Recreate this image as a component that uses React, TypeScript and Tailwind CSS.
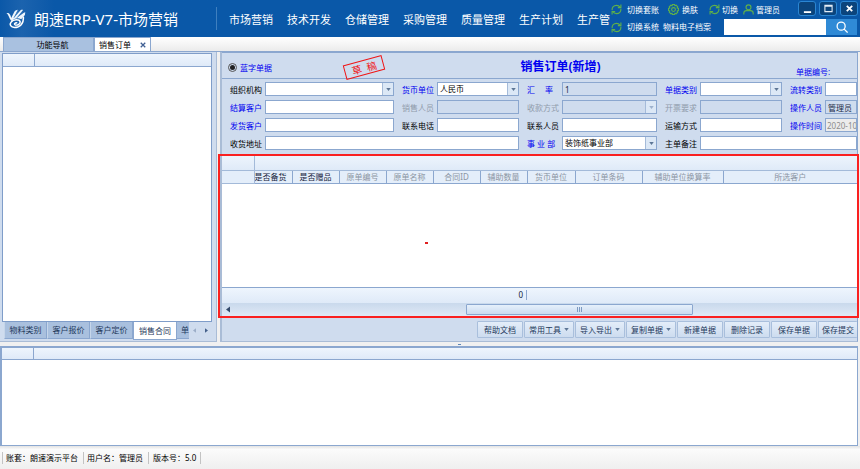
import React from "react";

const navItems = ["市场营销", "技术开发", "仓储管理", "采购管理", "质量管理", "生产计划", "生产管"];

const columns = [
  { title: "是否备货", width: 38, strong: true },
  { title: "是否赠品", width: 47, strong: true },
  { title: "原单编号", width: 47 },
  { title: "原单名称", width: 47 },
  { title: "合同ID", width: 47 },
  { title: "辅助数量", width: 47 },
  { title: "货币单位", width: 48 },
  { title: "订单条码", width: 67 },
  { title: "辅助单位换算率", width: 81 },
  { title: "所选客户" },
];

const actions = [
  { label: "帮助文档" },
  { label: "常用工具", menu: true },
  { label: "导入导出", menu: true },
  { label: "复制单据", menu: true },
  { label: "新建单据" },
  { label: "删除记录" },
  { label: "保存单据" },
];

function RefreshIcon() {
  return (
    <svg viewBox="0 0 20 20" className="h-[11px] w-[11px] shrink-0" fill="none" stroke="#5fb04a" strokeWidth="2">
      <path d="M2 11.500C1.500 6 5 2.500 10 2.500c3 0 5 1 7 3.500M18 8.500c.5 5.500-3 9-8 9-3 0-5-1-7-3.500" />
      <path d="M18 1v5.500h-5.500M2 19v-5.500h5.500" />
    </svg>
  );
}

function GearIcon() {
  return (
    <svg viewBox="0 0 20 20" className="h-[11px] w-[11px] shrink-0" fill="none" stroke="#5fb04a" strokeWidth="2">
      <path d="M8 1h4l.7 2.300 2.200-1 2.800 2.800-1 2.200L19 8v4l-2.300.7 1 2.200-2.800 2.800-2.200-1L12 19H8l-.7-2.300-2.200 1-2.800-2.800 1-2.200L1 12V8l2.300-.7-1-2.200 2.800-2.800 2.200 1z" />
      <circle cx="10" cy="10" r="3.500" />
    </svg>
  );
}

function UserIcon() {
  return (
    <svg viewBox="0 0 20 20" className="h-[11px] w-[11px] shrink-0" fill="none" stroke="#5fb04a" strokeWidth="2">
      <circle cx="10" cy="6" r="4.500" />
      <path d="M1.500 19v-2.500c0-3 2.500-4.500 5-4.500h7c2.500 0 5 1.500 5 4.500V19" />
    </svg>
  );
}

function Logo() {
  return (
    <svg viewBox="0 0 54 54" className="h-[20px] w-[20px] shrink-0" fill="none" stroke="#fff" strokeLinecap="round">
      <path d="M1 11c9-1 11 5 13 13l9-17c2-4 6-4 9-5L20 25 40 3c2-1 5-1 6 0L28 25 48 10l4-1-1 7-10 12c-8-5-20-3-25 5-7-4-8-17-15-22z" fill="#f0f6fc" stroke="none" />
      <path d="m22 23 11-18M29 24 44 8" stroke="#5d97cf" strokeWidth="1.500" />
      <path d="M47 22c1 17-9 28-24 28-10 0-15-8-9-15 6-8 22-8 24-1 2 6-7 11-13 9-4-2-2-6 4-6" strokeWidth="4" />
    </svg>
  );
}

function Caret({ className = "text-[#5d7696]" }: { className?: string }) {
  return (
    <svg viewBox="0 0 6 4" className={`h-[3px] w-[5px] shrink-0 ${className}`} fill="currentColor">
      <path d="M0 0h6L3 4z" />
    </svg>
  );
}

type FieldProps = {
  id: string;
  label: string;
  tone?: "black" | "blue" | "gray";
  value?: string;
  kind?: "text" | "select";
  disabled?: boolean;
  wide?: boolean;
  fill?: string;
};

function Field({ id, label, tone = "black", value = "", kind = "text", disabled, wide, fill }: FieldProps) {
  const color = tone === "blue" ? "text-[#0000f0]" : tone === "gray" ? "text-[#8f9bab]" : "text-black";
  const bg = fill ?? (disabled ? "bg-[#cfdcee]" : "bg-white");
  return (
    <div className={`flex h-[14px] min-w-0 items-center ${wide ? "col-span-2" : ""}`}>
      <label htmlFor={id} className={`w-[35px] shrink-0 whitespace-pre pt-px ${color}`}>
        {label}
      </label>
      {kind === "select" ? (
        <div className={`flex h-full min-w-0 flex-1 border border-[#8ba7cf] ${bg}`}>
          <select
            id={id}
            disabled={disabled}
            defaultValue={value}
            className="min-w-0 flex-1 appearance-none bg-transparent pl-[2px] text-black outline-none"
          >
            <option>{value}</option>
          </select>
          <span className="pointer-events-none flex w-[11px] items-center justify-center border-l border-[#a5bbd9] bg-[#dce8f6]">
            <Caret className={disabled ? "text-[#9db1cd]" : "text-[#5d7696]"} />
          </span>
        </div>
      ) : (
        <input
          id={id}
          type="text"
          disabled={disabled}
          defaultValue={value}
          className={`h-full w-0 min-w-0 flex-1 border border-[#8ba7cf] outline-none ${bg} ${
            fill === "bg-[#ececec]" ? "pl-px text-[#8d8d8d]" : "px-[2px] text-[#1c2c48]"
          }`}
        />
      )}
    </div>
  );
}

function Header() {
  return (
    <header className="flex h-[37px] shrink-0 bg-[#0a58a8] text-white">
      <div className="flex w-[216px] shrink-0 items-center bg-linear-to-r from-[#0a58a8] via-[#1b63ae] via-10% to-[#0a58a8] to-25% pl-[6px]">
        <Logo />
        <h1 className="ml-[8px] whitespace-nowrap text-[15px] leading-5">朗速ERP-V7-市场营销</h1>
      </div>
      <nav className="my-[7px] flex min-w-0 flex-1 items-center gap-[14px] overflow-hidden border-l border-[#3f7fbf] pl-3 pt-[2px] text-[11px]">
        {navItems.map((item) => (
          <a key={item} href="#" className="shrink-0">
            {item}
          </a>
        ))}
      </nav>
      <div className="flex w-[249px] shrink-0 flex-col">
        <div className="flex h-[19px] items-center">
          <button className="flex w-[57px] items-center gap-[5px]">
            <RefreshIcon />
            切换套账
          </button>
          <button className="flex w-[41px] items-center gap-[3px]">
            <GearIcon />
            换肤
          </button>
          <button className="flex w-[34px] items-center gap-[2px]">
            <RefreshIcon />
            切换
          </button>
          <button className="flex items-center gap-[2px] whitespace-nowrap">
            <UserIcon />
            管理员
          </button>
          <div className="ml-auto flex gap-[3px] self-start pr-[2px] pt-px">
            <button aria-label="最小化" className="flex h-[15px] w-[18px] items-center justify-center rounded-[3px] border border-[#2b86d3] bg-[#0b447c]">
              <svg viewBox="0 0 10 10" className="h-[9px] w-[9px]" stroke="#fff" strokeWidth="2"><path d="M1 9h8" /></svg>
            </button>
            <button aria-label="最大化" className="flex h-[15px] w-[18px] items-center justify-center rounded-[3px] border border-[#2b86d3] bg-[#0b447c]">
              <svg viewBox="0 0 10 10" className="h-[9px] w-[9px]" fill="none" stroke="#e5edf5" strokeWidth="1.200"><path d="M1 1.500h8v7H1zM1 2.500h8" /></svg>
            </button>
            <button aria-label="关闭" className="flex h-[15px] w-[18px] items-center justify-center rounded-[3px] border border-[#2b86d3] bg-[#0b447c]">
              <svg viewBox="0 0 10 10" className="h-[9px] w-[9px]" stroke="#fff" strokeWidth="2"><path d="m2 2 6 6M8 2 2 8" /></svg>
            </button>
          </div>
        </div>
        <div className="flex h-4 items-center">
          <button className="flex items-center gap-[5px] whitespace-nowrap">
            <RefreshIcon />
            切换系统
          </button>
          <button className="ml-1 whitespace-nowrap">物料电子档案</button>
          <form className="ml-auto flex h-full w-[136px] pr-[3px]">
            <input type="search" aria-label="搜索" className="h-full w-0 flex-1 bg-white px-1 text-black outline-none" />
            <button type="button" aria-label="搜索" className="flex w-[31px] items-center justify-center bg-[#2f8ad6]">
              <svg viewBox="0 0 14 14" className="h-3 w-3" fill="none" stroke="#fff" strokeWidth="1.500">
                <circle cx="6" cy="6" r="4.700" />
                <path d="m9.500 9.500 4 4" />
              </svg>
            </button>
          </form>
        </div>
      </div>
    </header>
  );
}

function SidePanel() {
  const tab = "h-[17px] w-[43px] shrink-0 border border-t-0 border-[#8ba7cf] border-l-[#c6d6ea] bg-[#a9c0de] text-[#1e395b]";
  return (
    <aside className="flex w-[217px] shrink-0 flex-col border-b border-r border-[#a9bcd6] bg-[#cfdcee] pl-[2px] pr-1 pt-px">
      <div className="flex flex-1 flex-col border border-[#7f9dc9] bg-white">
        <div className="flex h-[13px] border-b border-[#8ba7cf] bg-linear-to-b from-[#eef5fd] to-[#dfeaf8]">
          <span className="w-8 border-r border-[#8ba7cf]" />
        </div>
      </div>
      <div role="tablist" className="flex h-[19px] items-start pl-[2px]">
        <button role="tab" className={tab}>物料类别</button>
        <button role="tab" className={tab}>客户报价</button>
        <button role="tab" className={tab}>客户定价</button>
        <button role="tab" aria-selected="true" className="h-[18px] w-11 shrink-0 border border-t-0 border-[#8ba7cf] bg-white text-[#1e395b]">
          销售合同
        </button>
        <button role="tab" className="h-[17px] w-3 shrink-0 border-b border-[#8ba7cf] bg-[#a9c0de] pl-1 text-left text-[#1e395b]">
          单
        </button>
        <button aria-label="向左" className="flex h-[17px] w-3 items-center justify-center text-[#9caec8]">
          <svg viewBox="0 0 4 6" className="h-[5px] w-[3px]" fill="currentColor"><path d="M4 0v6L0 3z" /></svg>
        </button>
        <button aria-label="向右" className="flex h-[17px] w-3 items-center justify-center text-[#44608a]">
          <svg viewBox="0 0 4 6" className="h-[5px] w-[3px]" fill="currentColor"><path d="M0 0v6l4-3z" /></svg>
        </button>
      </div>
    </aside>
  );
}

function OrderHead() {
  return (
    <div className="flex h-[27px] items-center border-y border-[#8ba7cf] pl-[6px]">
      <label className="flex w-[116px] shrink-0 items-center gap-[3px] pt-[4px] text-[#0000f0]">
        <input
          type="radio"
          name="kind"
          defaultChecked
          className="h-[9px] w-[9px] appearance-none rounded-full border border-[#555] bg-[#222] bg-clip-content p-px"
        />
        蓝字单据
      </label>
      <div className="shrink-0 pt-[3px]">
        <span className="flex h-[15px] w-10 -rotate-15 items-center justify-center border border-[#f01414] text-[10px] text-[#f01414]">
          草&nbsp;&nbsp;稿
        </span>
      </div>
      <h2 className="flex-1 whitespace-nowrap pr-[59px] pt-[2px] text-center text-[12px] leading-4 font-bold text-[#0000f0]">
        销售订单(新增)
      </h2>
      <span className="w-[61px] shrink-0 pt-3 text-[#0000f0]">单据编号:</span>
    </div>
  );
}

function OrderForm() {
  return (
    <form className="grid grid-cols-[164px_117px_130px_117px_minmax(0,1fr)] gap-x-2 gap-y-1 pb-[5px] pl-2 pt-[3px]">
      <Field id="org" label="组织机构" kind="select" />
      <Field id="currency" label="货币单位" tone="blue" kind="select" value="人民币" />
      <Field id="rate" label="汇　 率" tone="blue" value="1" fill="bg-[#cfdcee]" />
      <Field id="type" label="单据类别" tone="blue" kind="select" />
      <Field id="flow" label="流转类别" tone="blue" />
      <Field id="settle" label="结算客户" tone="blue" />
      <Field id="seller" label="销售人员" tone="gray" disabled />
      <Field id="pay" label="收款方式" tone="gray" kind="select" disabled />
      <Field id="invoice" label="开票要求" tone="gray" disabled />
      <Field id="operator" label="操作人员" tone="blue" value="管理员" fill="bg-[#cfdcee]" />
      <Field id="ship" label="发货客户" tone="blue" />
      <Field id="phone" label="联系电话" />
      <Field id="contact" label="联系人员" />
      <Field id="transport" label="运输方式" />
      <Field id="time" label="操作时间" tone="blue" value="2020-10" fill="bg-[#ececec]" />
      <Field id="address" label="收货地址" wide />
      <Field id="dept" label="事 业 部" tone="blue" kind="select" value="装饰纸事业部" />
      <Field id="note" label="主单备注" wide />
    </form>
  );
}

function OrderGrid() {
  return (
    <section className="relative">
      <table className="w-full table-fixed border-collapse bg-white leading-[10px]">
        <colgroup>
          <col style={{ width: 32 }} />
          {columns.map((c) => (
            <col key={c.title} style={{ width: c.width }} />
          ))}
        </colgroup>
        <thead>
          <tr className="h-[15px] bg-linear-to-b from-[#eef5fd] to-[#dfeaf8]">
            <td className="border-b border-r border-[#a3bad9]" />
            <td colSpan={10} className="border-b border-[#a3bad9]" />
          </tr>
          <tr className="h-[13px] bg-[#e4eefa]">
            <td className="border-b border-r border-[#a3bad9]" />
            {columns.map((c, i) => (
              <th
                key={c.title}
                className={`overflow-hidden whitespace-nowrap border-b border-[#8ba7cf] p-0 font-normal ${
                  i < 9 ? "border-r" : ""
                } ${i === 0 ? "text-left" : "text-center"} ${c.strong ? "text-[#14233c]" : "text-[#8b95a3]"}`}
              >
                {c.title}
              </th>
            ))}
          </tr>
        </thead>
        <tbody>
          <tr className="h-[104px]">
            <td colSpan={11} />
          </tr>
        </tbody>
        <tfoot>
          <tr className="h-4 border-t border-[#8ba7cf] bg-linear-to-b from-[#eef5fd] to-[#dfeaf8]">
            <td colSpan={6} />
            <td className="p-0 text-right">
              <span className="inline-block border-r border-[#8ba7cf] pr-[3px] text-[#14233c]">0</span>
            </td>
            <td colSpan={4} />
          </tr>
        </tfoot>
      </table>
      <div className="flex h-[13px] items-center bg-linear-to-b from-[#c9d9ec] to-[#dfe9f6] pl-1">
        <svg viewBox="0 0 4 6" className="h-[7px] w-[4px] text-[#33496b]" fill="currentColor"><path d="M4 0v6L0 3z" /></svg>
        <span className="flex-1" />
        <span className="flex h-[11px] w-[36%] items-center justify-center gap-px rounded-[1px] border border-[#8ba7cf] bg-linear-to-b from-[#e6f0fb] to-[#cbdcf0]">
          <i className="h-[5px] w-px bg-[#7d9ac2]" />
          <i className="h-[5px] w-px bg-[#7d9ac2]" />
          <i className="h-[5px] w-px bg-[#7d9ac2]" />
        </span>
        <span className="w-[26%]" />
      </div>
      <span className="absolute left-[203px] top-[87px] h-[2px] w-[3px] bg-[#e02020]" />
      <div className="pointer-events-none absolute -bottom-[2px] -left-[4px] -right-[2px] -top-px border-2 border-[#fa2020]" />
    </section>
  );
}

function Toolbar() {
  const base =
    "flex h-[17px] shrink-0 items-center justify-center gap-[3px] whitespace-nowrap rounded-[1px] border border-[#a9bfdc] bg-linear-to-b from-[#e3edf9] to-[#cddcef] text-[#1e395b]";
  return (
    <div className="flex flex-1 items-start justify-end gap-px pt-[5px]">
      {actions.map((a) => (
        <button key={a.label} className={`${base} ${a.menu ? "w-[50px]" : "w-[46px]"}`}>
          {a.label}
          {a.menu && <Caret />}
        </button>
      ))}
      <button className={`${base} w-[39px] border-r-0`}>保存提交</button>
    </div>
  );
}

export default function App() {
  return (
    <div className="flex min-h-screen flex-col overflow-hidden bg-[#f0f0f0] font-['Noto_Sans','Noto_Sans_CJK_SC',sans-serif] text-[8px] leading-3 text-black">
      <Header />
      <div role="tablist" className="flex h-[15px] shrink-0 items-end border-b border-[#8ba7cf] bg-linear-to-b from-white to-[#ebebeb] pl-[3px]">
        <button role="tab" className="h-[14px] w-[91px] border border-b-0 border-[#8ba7cf] bg-[#a9c1e0] pl-2">功能导航</button>
        <button role="tab" aria-selected="true" className="flex h-[14px] w-[57px] items-center border border-b-0 border-[#8ba7cf] bg-white pl-1">
          销售订单
          <svg viewBox="0 0 8 8" className="ml-[9px] h-[6px] w-[6px]" stroke="#3f5f93" strokeWidth="1.700"><path d="m1 1 6 6M7 1 1 7" /></svg>
        </button>
      </div>
      <div className="flex flex-1 flex-col pr-[2px]">
        <main className="flex">
          <SidePanel />
          <div className="flex min-w-0 flex-1 flex-col pl-[3px]">
            <div className="flex min-w-0 flex-1 flex-col border-b border-l-2 border-r border-[#a9bcd6] border-r-[#8ba7cf] bg-[#cfdcee]">
              <OrderHead />
              <OrderForm />
              <OrderGrid />
              <Toolbar />
              <div className="h-[3px]" />
            </div>
          </div>
        </main>
        <div className="flex h-[4px] items-center justify-center pl-[60px]">
          <span className="h-px w-[3px] bg-[#5d86b5]" />
        </div>
        <section className="flex flex-1 flex-col border border-l-2 border-t-2 border-[#8ba7cf] bg-white">
          <div className="flex h-[12px] border-b border-[#8ba7cf] bg-linear-to-b from-[#eef5fd] to-[#dfeaf8]">
            <span className="w-8 border-r border-[#8ba7cf]" />
          </div>
        </section>
      </div>
      <footer className="flex h-[23px] shrink-0 items-center bg-linear-to-b from-[#e3e3e3] via-[#fbfbfb] via-15% to-[#efefef] pl-[2px]">
        <span className="border-l border-[#c3c3c3] px-[3px]">账套：朗速演示平台</span>
        <span className="ml-[2px] border-l border-[#c3c3c3] px-[3px]">用户名：管理员</span>
        <span className="ml-[2px] border-x border-[#c3c3c3] px-[4px]">版本号：5.0</span>
      </footer>
    </div>
  );
}
